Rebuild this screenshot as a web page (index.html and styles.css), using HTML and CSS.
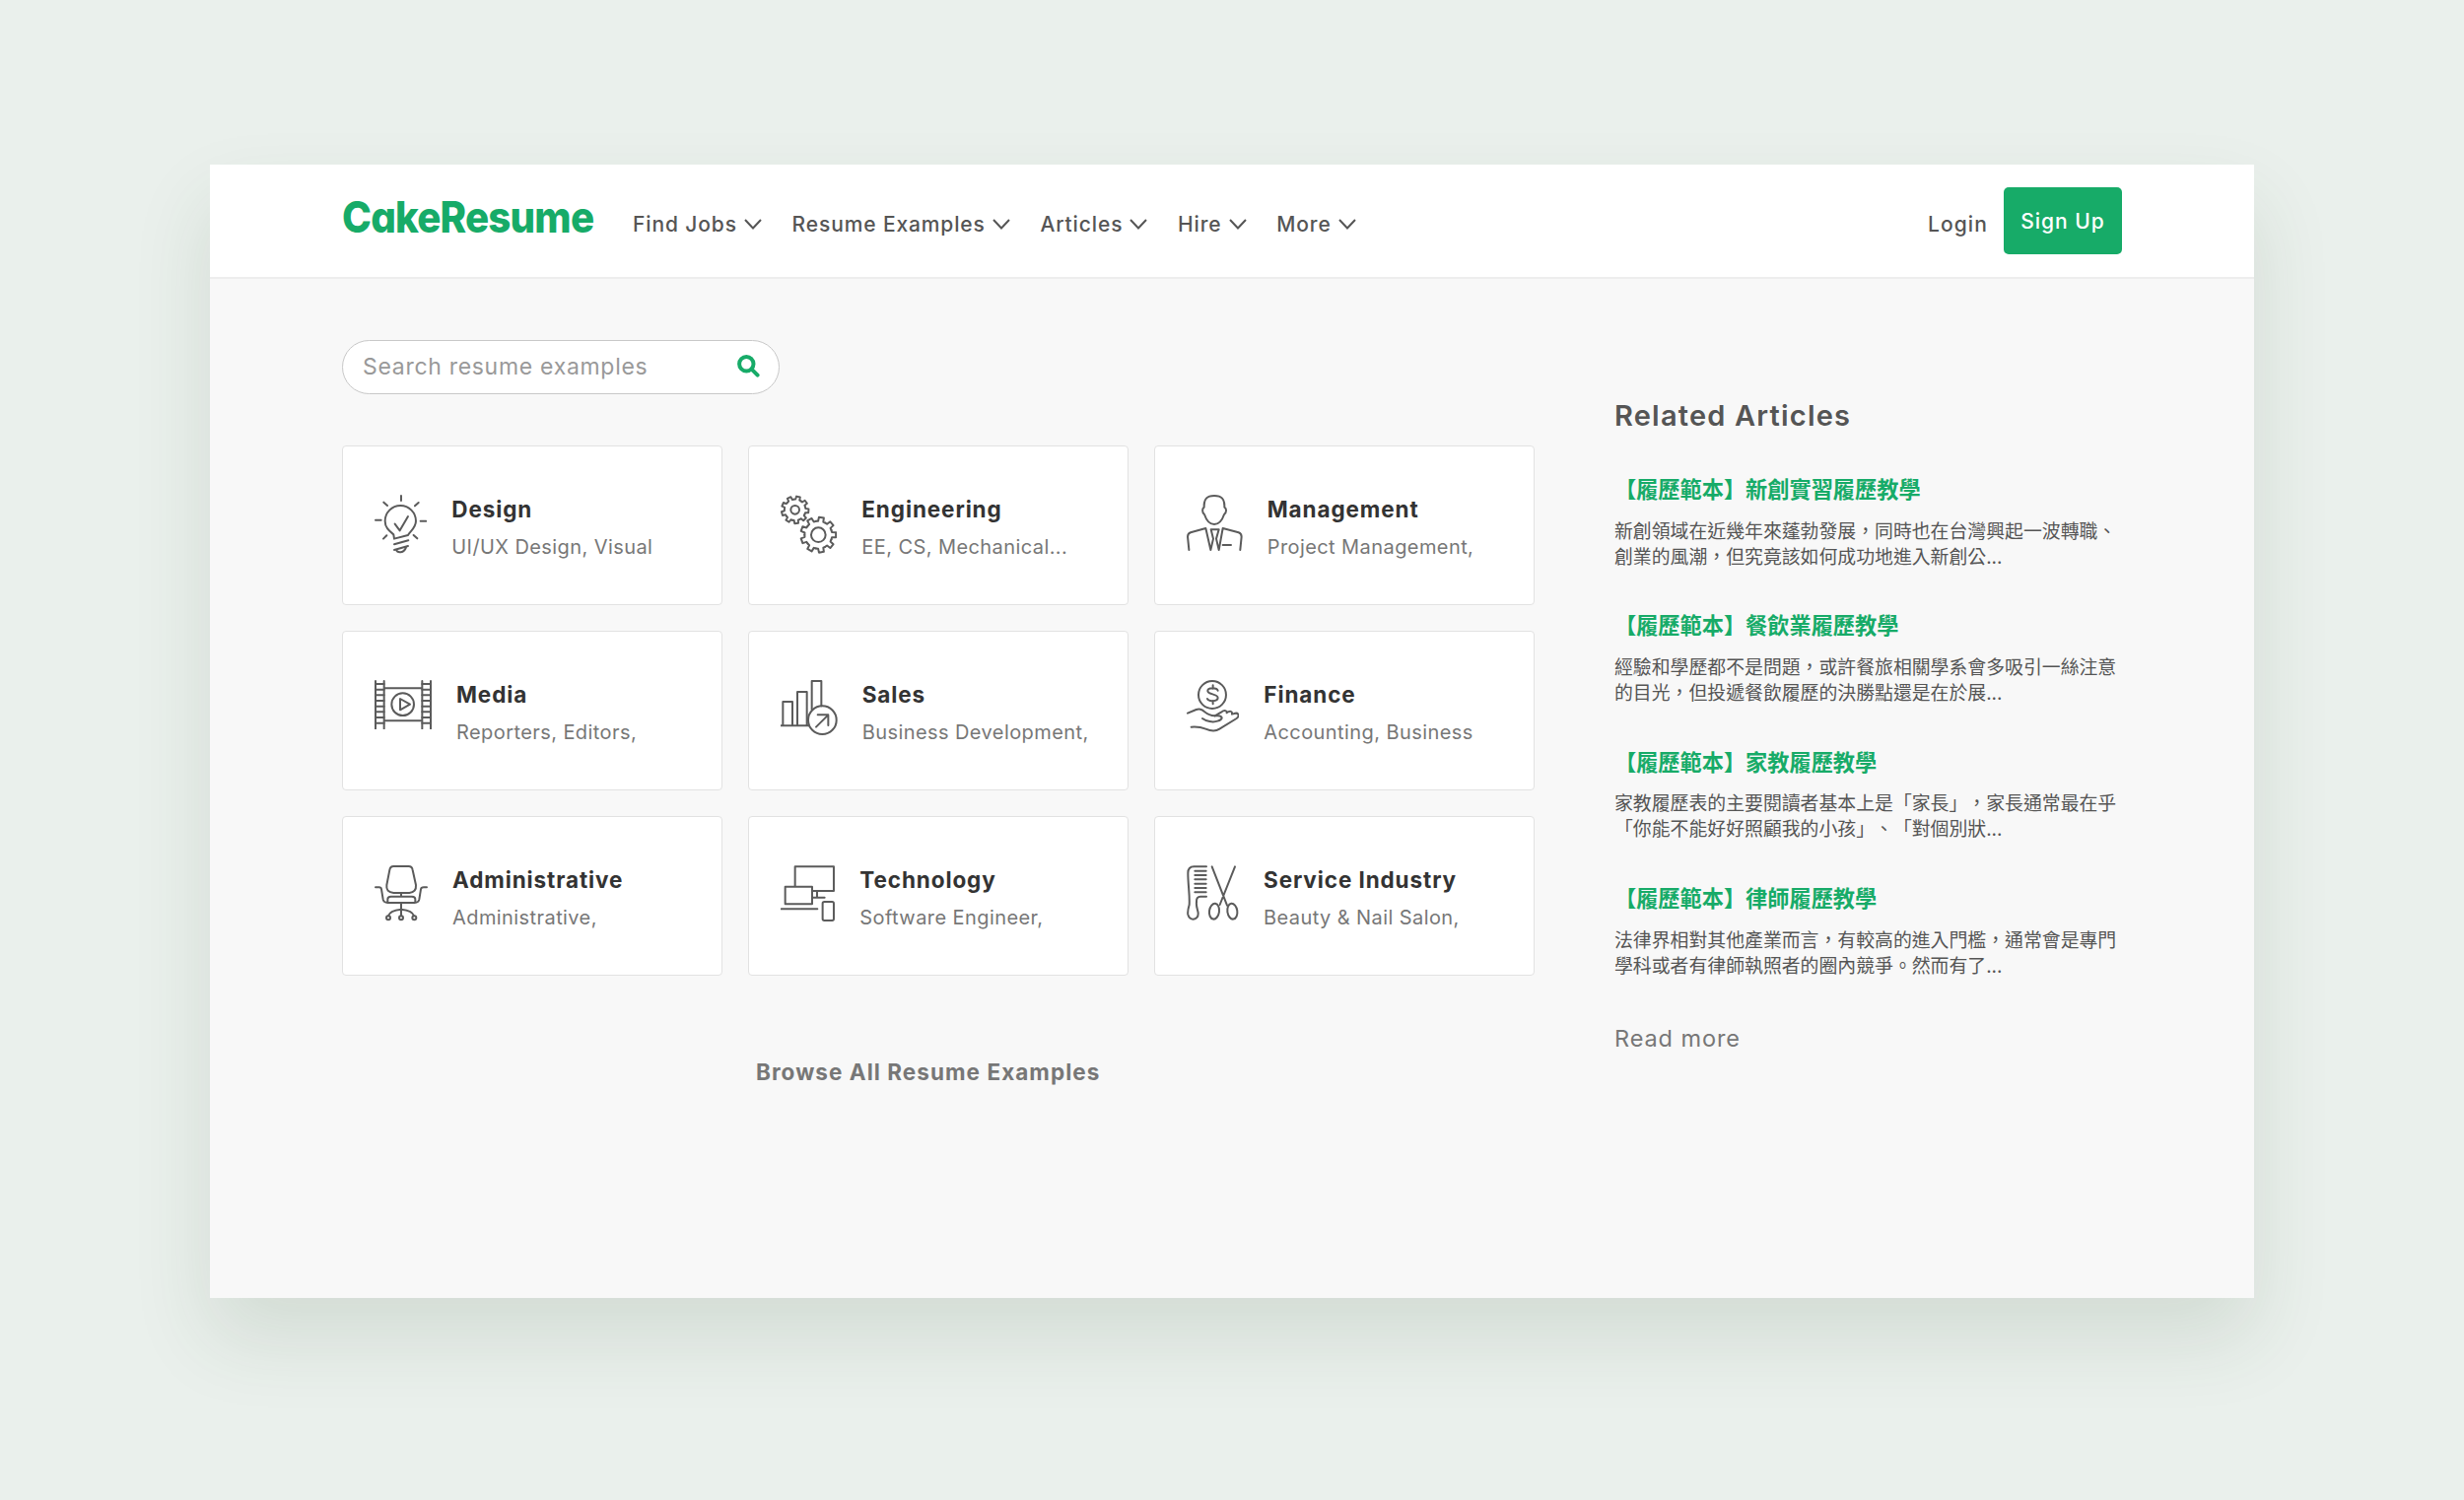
FILE: index.html
```
<!DOCTYPE html>
<html lang="zh-Hant">
<head>
<meta charset="UTF-8">
<meta name="viewport" content="width=device-width, initial-scale=1.0">
<title>CakeResume - Resume Examples</title>
<link rel="stylesheet" href="styles.css">
</head>
<body>

<div class="window">
    <header class="navbar">
        <a class="logo">CakeResume</a>
        <nav class="nav-links">
            <a class="nav-item"><span>Find Jobs</span><svg class="chevron" viewBox="0 0 18 11"><path d="M1 1l8 8.5L17 1"/></svg></a>
            <a class="nav-item"><span>Resume Examples</span><svg class="chevron" viewBox="0 0 18 11"><path d="M1 1l8 8.5L17 1"/></svg></a>
            <a class="nav-item"><span>Articles</span><svg class="chevron" viewBox="0 0 18 11"><path d="M1 1l8 8.5L17 1"/></svg></a>
            <a class="nav-item"><span>Hire</span><svg class="chevron" viewBox="0 0 18 11"><path d="M1 1l8 8.5L17 1"/></svg></a>
            <a class="nav-item"><span>More</span><svg class="chevron" viewBox="0 0 18 11"><path d="M1 1l8 8.5L17 1"/></svg></a>
        </nav>
        <a class="login">Login</a>
        <a class="btn-signup">Sign Up</a>
    </header>

    <div class="content">
        <main class="examples">
            <div class="search-box">
                <span class="placeholder">Search resume examples</span>
                <svg class="search-icon" viewBox="0 0 23 23"><circle cx="9.3" cy="9.3" r="7.2"/><path d="M14.8 14.8l5.8 5.8"/></svg>
            </div>

            <div class="card-grid">
                <div class="card">
                    <svg class="icon" width="53.3" height="60" viewBox="0 0 160 180">
                        <path d="M81 3v15M28 23l11 10M134 24l-11 10M3 77h17M140 80h17M27 134l10-10M130 133l-11-10"/>
                        <path d="M60 134l-2-13C46 111 32 101 32 80a47 47 0 0 1 94 0c0 21-18 31-24 43z"/>
                        <path d="M62 89l15 20 25-43M60 151l43-12M60 168l42-12M66 168c4 10 24 10 30-8"/>
                    </svg>
                    <div class="card-text">
                        <h3>Design</h3>
                        <p>UI/UX Design, Visual</p>
                    </div>
                </div>
                <div class="card">
                    <svg class="icon" width="57.3" height="60" viewBox="0 0 172 180">
                        <defs>
                            <path id="tooth" d="M-14.4-39.5L-8-41.2-7.5-53.5H7.5L8-41.2 14.4-39.5"/>
                            <g id="gear">
                                <use href="#tooth"/>
                                <use href="#tooth" transform="rotate(40)"/>
                                <use href="#tooth" transform="rotate(80)"/>
                                <use href="#tooth" transform="rotate(120)"/>
                                <use href="#tooth" transform="rotate(160)"/>
                                <use href="#tooth" transform="rotate(200)"/>
                                <use href="#tooth" transform="rotate(240)"/>
                                <use href="#tooth" transform="rotate(280)"/>
                                <use href="#tooth" transform="rotate(320)"/>
                            </g>
                        </defs>
                        <use href="#gear" class="gear-small" transform="translate(44 46) rotate(14) scale(.77)"/>
                        <circle cx="44" cy="46" r="13"/>
                        <use href="#gear" transform="translate(115 122) rotate(10)"/>
                        <circle cx="115" cy="122" r="22"/>
                    </svg>
                    <div class="card-text">
                        <h3>Engineering</h3>
                        <p>EE, CS, Mechanical...</p>
                    </div>
                </div>
                <div class="card">
                    <svg class="icon" width="56.7" height="57.3" viewBox="0 0 170 172">
                        <path d="M84 3C62 3 52 12 53 38c-6 4-7 16 1 22 6 18 16 30 30 30s24-12 30-30c8-6 8-18 1-22 1-26-9-35-31-35z"/>
                        <path d="M7 168L3 128q0-10 9-13l46-13 15 66 8-34-7-28h24l-8 28 8 34 12-66 48 13q9 3 9 13l-4 40M110 153h25"/>
                    </svg>
                    <div class="card-text">
                        <h3>Management</h3>
                        <p>Project Management,</p>
                    </div>
                </div>
                <div class="card">
                    <svg class="icon" width="58" height="50" viewBox="0 0 174 150">
                        <path d="M3 3v145M29 3v145M145 3v145M171 3v145M29 25h116M29 124h116"/>
                        <path d="M3 12h26M3 29h26M3 46h26M3 63h26M3 80h26M3 97h26M3 114h26M3 131h26M145 12h26M145 29h26M145 46h26M145 63h26M145 80h26M145 97h26M145 114h26M145 131h26"/>
                        <circle cx="86" cy="74" r="34"/>
                        <path d="M78 57v34l30-17z"/>
                    </svg>
                    <div class="card-text">
                        <h3>Media</h3>
                        <p>Reporters, Editors,</p>
                    </div>
                </div>
                <div class="card">
                    <svg class="icon" width="57.7" height="56" viewBox="0 0 173 168">
                        <path d="M7 139V66h29v73M51 139V36h29v103M95 90V3h29v76M0 139h86"/>
                        <circle cx="127" cy="122" r="43"/>
                        <path d="M108 143l37-37M113 106h32v32"/>
                    </svg>
                    <div class="card-text">
                        <h3>Sales</h3>
                        <p>Business Development,</p>
                    </div>
                </div>
                <div class="card">
                    <svg class="icon" width="53.3" height="54" viewBox="0 0 160 162">
                        <circle cx="78" cy="45" r="42"/>
                        <path d="M95 32C92 22 64 22 64 33c0 12 31 8 31 21 0 12-29 12-32 3M80 16v10M80 63v10"/>
                        <path d="M3 101l26-11q9-4 18 1c11 8 21 19 39 18M48 117c12 9 32 13 46 8 16-5 18-15 2-16H84"/>
                        <path d="M86 109l19-11c10-8 19-5 17 2 10-8 18-5 16 4l7-2c11-4 19 6 7 15l-52 32c-10 7-26 7-42 0q-20-8-44-6"/>
                    </svg>
                    <div class="card-text">
                        <h3>Finance</h3>
                        <p>Accounting, Business</p>
                    </div>
                </div>
                <div class="card">
                    <svg class="icon" width="54" height="57.3" viewBox="0 0 162 172">
                        <path d="M58 3h46q10 0 12 11l10 46q2 22-20 24H58q-24-2-21-24l9-46Q48 3 58 3z"/>
                        <path d="M3 67h11q6 0 7 6l5 31q2 10 14 10h82q12 0 14-10l5-31q1-6 9-6h9M40 112v-9q0-8 10-8h64q10 0 10 8v9M81 84v11M81 114v40"/>
                        <path d="M42 154q4-16 39-20 35 4 39 20"/>
                        <circle cx="42" cy="160" r="6"/><circle cx="81" cy="160" r="6"/><circle cx="121" cy="160" r="6"/>
                    </svg>
                    <div class="card-text">
                        <h3>Administrative</h3>
                        <p>Administrative,</p>
                    </div>
                </div>
                <div class="card">
                    <svg class="icon" width="55.3" height="57.3" viewBox="0 0 166 172">
                        <path d="M44 64V4h118v74H98M14 65h82v53H14zM111 80v18M98 98h36M2 133h110"/>
                        <rect x="128" y="111" width="34" height="57" rx="5"/>
                    </svg>
                    <div class="card-text">
                        <h3>Technology</h3>
                        <p>Software Engineer,</p>
                    </div>
                </div>
                <div class="card">
                    <svg class="icon" width="53" height="56" viewBox="0 0 159 168">
                        <path d="M60 4H22Q4 4 4 24c0 36 6 66 4 96q-6 20-4 30 4 14 16 14 16-2 15-19c-1-10-7-20-5-33q-1-17 12-17h18"/>
                        <path d="M25 17h34M25 30h34M25 43h34M25 56h34M25 69h34M25 82h34M77 4l46 118M147 4l-46 116"/>
                        <ellipse cx="84" cy="140" rx="15" ry="24" transform="rotate(8 84 140)"/>
                        <ellipse cx="139" cy="140" rx="15" ry="24" transform="rotate(-8 139 140)"/>
                    </svg>
                    <div class="card-text">
                        <h3>Service Industry</h3>
                        <p>Beauty &amp; Nail Salon,</p>
                    </div>
                </div>
            </div>

            <a class="browse-all">Browse All Resume Examples</a>
        </main>

        <aside class="related">
            <h2>Related Articles</h2>
            <article>
                <h4>【履歷範本】新創實習履歷教學</h4>
                <p>新創領域在近幾年來蓬勃發展，同時也在台灣興起一波轉職、<br>創業的風潮，但究竟該如何成功地進入新創公...</p>
            </article>
            <article>
                <h4>【履歷範本】餐飲業履歷教學</h4>
                <p>經驗和學歷都不是問題，或許餐旅相關學系會多吸引一絲注意<br>的目光，但投遞餐飲履歷的決勝點還是在於展...</p>
            </article>
            <article>
                <h4>【履歷範本】家教履歷教學</h4>
                <p>家教履歷表的主要閱讀者基本上是「家長」，家長通常最在乎<br>「你能不能好好照顧我的小孩」、「對個別狀...</p>
            </article>
            <article>
                <h4>【履歷範本】律師履歷教學</h4>
                <p>法律界相對其他產業而言，有較高的進入門檻，通常會是專門<br>學科或者有律師執照者的圈內競爭。然而有了...</p>
            </article>
            <a class="read-more">Read more</a>
        </aside>
    </div>
</div>

</body>
</html>
```

FILE: styles.css
```
* {
    box-sizing: border-box;
}
body {
    margin: 0;
    padding: 167px 213px 205px;
    background-color: #eaf0ec;
    color: #555;
    font-family: Inter, "Noto Sans CJK TC", sans-serif;
}
h2, h3, h4, p {
    margin: 0;
}
.window {
    height: 1150px;
    background-color: #f8f8f8;
    box-shadow: 0 40px 76px rgba(40, 70, 45, 0.12);
}

/* navbar */
.navbar {
    display: flex;
    align-items: center;
    height: 116px;
    padding: 0 134px;
    background-color: #fff;
    border-bottom: 2px solid #ededed;
    font-size: 21px;
    font-weight: 450;
    letter-spacing: 0.88px;
}
.logo {
    width: 295px;
    padding-bottom: 8px;
    color: #17ab68;
    font-size: 44.5px;
    font-weight: 800;
    font-feature-settings: "cv11";
    letter-spacing: -0.9px;
    white-space: nowrap;
    transform: scaleX(0.905);
    transform-origin: left;
}
.nav-links {
    display: flex;
    flex: 1;
    gap: 30.7px;
    padding-top: 7px;
}
.nav-item {
    display: flex;
    align-items: center;
    gap: 7px;
}
.chevron {
    width: 18px;
    height: 11px;
    fill: none;
    stroke: #555;
    stroke-width: 2;
}
.login {
    padding-top: 7px;
    margin-right: 16px;
    letter-spacing: 1.1px;
}
.btn-signup {
    width: 120px;
    height: 68px;
    line-height: 69px;
    text-align: center;
    border-radius: 5px;
    background-color: #17ab68;
    color: #fff;
    letter-spacing: 1px;
}

.content {
    display: flex;
    padding: 62px 134px 0;
}
.examples {
    width: 1210px;
}

/* search */
.search-box {
    display: flex;
    align-items: center;
    justify-content: space-between;
    width: 444px;
    height: 55px;
    padding: 0 19px 2px 20px;
    border: 1px solid #c8c8c8;
    border-radius: 28px;
    background-color: #fff;
    color: #999;
    font-size: 23px;
    letter-spacing: 0.7px;
}
.search-icon {
    width: 23px;
    height: 23px;
    fill: none;
    stroke: #17ab68;
    stroke-width: 4;
    stroke-linecap: round;
}

/* cards */
.card-grid {
    display: grid;
    grid-template-columns: repeat(3, 386px);
    grid-auto-rows: 162px;
    gap: 26px;
    margin-top: 52px;
}
.card {
    display: flex;
    align-items: flex-start;
    gap: 25px;
    padding: 49px 0 0 32px;
    border: 1px solid #e2e2e2;
    border-radius: 4px;
    background-color: #fff;
    white-space: nowrap;
}
.card-text {
    margin-top: -1px;
}
.icon {
    flex: none;
    fill: none;
    stroke: #5b5b5b;
    stroke-width: 6;
    stroke-linecap: round;
    stroke-linejoin: round;
}
.gear-small {
    stroke-width: 7.5;
}
.card h3 {
    color: #333;
    font-size: 22.5px;
    font-weight: 700;
    line-height: 32px;
    letter-spacing: 0.9px;
}
.card p {
    margin-top: 6px;
    color: #777;
    font-size: 20px;
    line-height: 32px;
    letter-spacing: 0.42px;
}
.browse-all {
    display: block;
    margin-top: 78px;
    padding-left: 420px;
    color: #777;
    font-size: 22.5px;
    font-weight: 700;
    line-height: 40px;
    letter-spacing: 1.05px;
}

/* related articles */
.related {
    flex: 1;
    padding: 57px 0 0 81px;
    text-spacing-trim: space-all;
    white-space: nowrap;
}
.related h2 {
    font-size: 29px;
    font-weight: 600;
    line-height: 40px;
    letter-spacing: 1.2px;
}
.related h2 + article {
    margin-top: 39px;
}
.related article {
    height: 138.4px;
}
.related h4 {
    color: #17ab68;
    font-size: 22.2px;
    font-weight: 700;
    line-height: 32px;
}
.related article p {
    margin-top: 13.5px;
    font-size: 18.87px;
    line-height: 26px;
}
.read-more {
    display: block;
    margin-top: 4.5px;
    color: #777;
    font-size: 23.5px;
    letter-spacing: 0.9px;
}
```
